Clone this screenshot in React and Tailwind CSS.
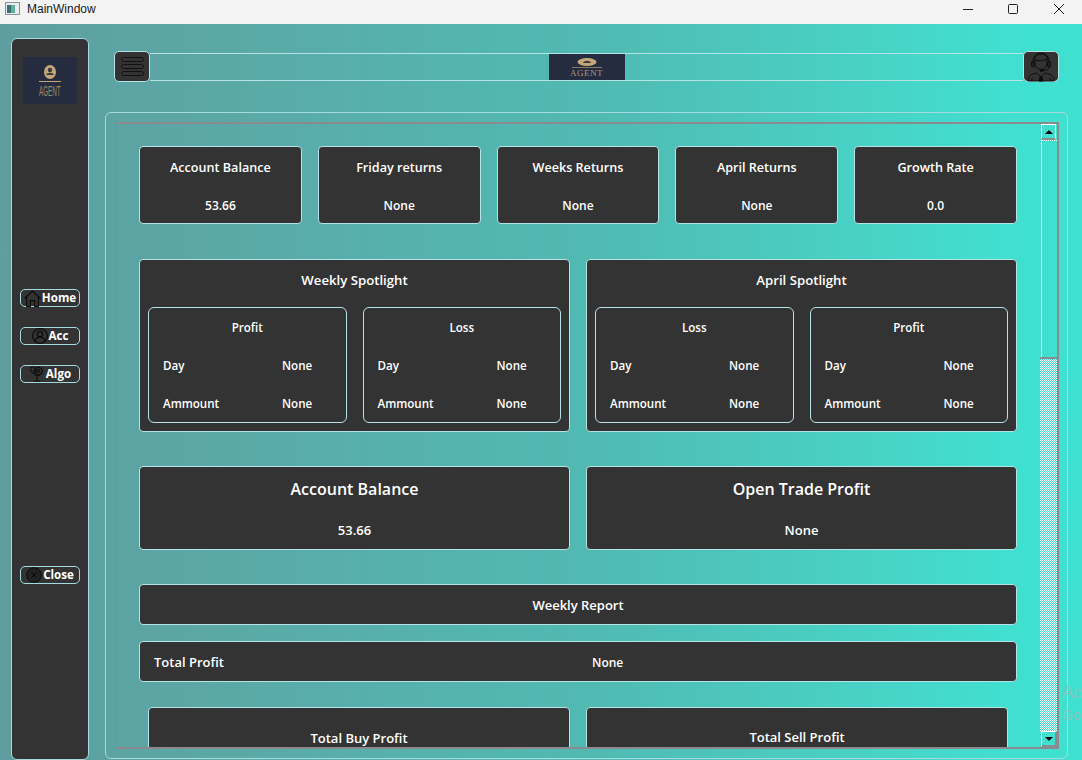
import React from 'react';

const FONT = "font-['Open_Sans','Noto_Sans',sans-serif]";

const StatCard = ({ title, value }) => (
  <div className="flex h-[78px] flex-1 flex-col items-center rounded border border-[#b5e3e6] bg-[#333333] pt-[13px] font-semibold text-white">
    <div className="text-[12.6px] leading-4">{title}</div>
    <div className="mt-[22px] text-xs leading-4">{value}</div>
  </div>
);

const MiniCard = ({ title }) => (
  <div className="flex h-[116px] flex-1 flex-col rounded-md border border-[#b5e3e6] px-[14px] pt-[12px] text-[11.6px] font-semibold text-white">
    <div className="text-center leading-4">{title}</div>
    <div className="mt-[22px] flex leading-4">
      <span className="w-[119px]">Day</span>
      <span>None</span>
    </div>
    <div className="mt-[22px] flex leading-4">
      <span className="w-[119px]">Ammount</span>
      <span>None</span>
    </div>
  </div>
);

const Spotlight = ({ title, first, second }) => (
  <div className="flex h-[173px] flex-1 flex-col rounded border border-[#b5e3e6] bg-[#333333] px-2 pt-[12px]">
    <div className="text-center text-[13.2px] font-semibold leading-4 text-white">{title}</div>
    <div className="mt-[19px] flex gap-4">
      <MiniCard title={first} />
      <MiniCard title={second} />
    </div>
  </div>
);

const BigCard = ({ title, value }) => (
  <div className="flex h-[84px] flex-1 flex-col items-center rounded border border-[#b5e3e6] bg-[#333333] pt-[12px] font-semibold text-white">
    <div className="text-base leading-5">{title}</div>
    <div className="mt-[23px] text-[13px] leading-4">{value}</div>
  </div>
);

const AgentLogo = ({ wide }) =>
  wide ? (
    <div className="flex h-[26px] w-[76px] flex-col items-center bg-[#262c40]">
      <svg width="46" height="15" viewBox="0 0 46 15" className="shrink-0">
        <ellipse cx="23" cy="8" rx="9.500" ry="4" fill="#c5a67c" />
        <path d="M19 9c1-3 7-3 8 0z" fill="#3d3a3a" />
        <path d="M8 13.500H38" stroke="#8a7a62" strokeWidth="1" />
      </svg>
      <div className="font-['Liberation_Serif',serif] text-[9px] leading-[9px] tracking-[0.5px] text-[#a8977a]">AGENT</div>
    </div>
  ) : (
    <div className="flex h-[47px] w-[54px] flex-col items-center bg-[#262c40] pt-2">
      <svg width="22" height="18" viewBox="0 0 22 18" className="shrink-0">
        <ellipse cx="11" cy="7" rx="6" ry="7" fill="#c5a67c" />
        <circle cx="11" cy="5" r="2.200" fill="#3d3a3a" />
        <path d="M7 10c1-3 7-3 8 0z" fill="#3d3a3a" />
        <path d="M0 16.500H22" stroke="#c5a67c" strokeWidth="1" />
      </svg>
      <div className="mt-[2px] scale-x-[0.42] font-['Liberation_Sans',sans-serif] text-[15px] leading-[12px] text-[#9c8a64]">AGENT</div>
    </div>
  );

const HomeIcon = () => (
  <svg width="17" height="17" viewBox="0 0 16 16" fill="none" stroke="#0a0a0a" strokeWidth="1">
    <path d="M0.500 8 8 1l7.500 7M2.500 6.500V15.500H6V10h4v5.500h3.500V6.500" />
  </svg>
);

const UserIcon = () => (
  <svg width="16" height="16" viewBox="0 0 16 16" fill="none" stroke="#0a0a0a" strokeWidth="1.100">
    <circle cx="8" cy="8" r="7.400" />
    <circle cx="8" cy="6.300" r="2.700" />
    <path d="M3 13c.8-3 2.800-3.800 5-3.800s4.200.8 5 3.800" />
  </svg>
);

const AlgoIcon = () => (
  <svg width="16" height="16" viewBox="0 0 16 16" fill="none" stroke="#0a0a0a" strokeWidth="1.400" strokeDasharray="1.500 0.700">
    <circle cx="9.500" cy="5" r="3.800" />
    <circle cx="4" cy="3.500" r="2.500" />
    <circle cx="9" cy="5" r="1.500" />
    <path d="M8 9v6.500M5 15.500h6M4 7l4 3M13 7l-4 3" />
  </svg>
);

const CloseIcon = () => (
  <svg width="16" height="16" viewBox="0 0 16 16" fill="#222" stroke="#0a0a0a" strokeWidth="1">
    <circle cx="8" cy="8" r="7.300" />
    <path d="M5.500 5.500l5 5M10.500 5.500l-5 5" stroke="#050505" />
  </svg>
);

const NavButton = ({ label, icon, className }) => (
  <button className={`flex h-[18px] w-[60px] items-center justify-center gap-px rounded-[5px] border border-[#a4dbe0] text-[11.6px] font-bold text-white ${className}`}>
    {icon}
    <span className="leading-4">{label}</span>
  </button>
);

const HeadBtn = ({ children }) => (
  <div className="flex h-[31px] w-[36px] shrink-0 items-center justify-center rounded-[5px] border border-[#b5e3e6] bg-[#333333]">
    {children}
  </div>
);

export default function App() {
  return (
    <div className={`relative flex h-[760px] w-[1082px] flex-col overflow-hidden ${FONT}`}>
      {/* title bar */}
      <div className="flex h-6 shrink-0 items-center bg-[#f3f3f3] pb-[7px] pl-[5px] font-['Liberation_Sans',sans-serif] text-xs text-[#1a1a1a]">
        <svg width="15" height="13" viewBox="0 0 15 13">
          <rect x="0.500" y="0.500" width="14" height="12" fill="#e8eef0" stroke="#8a949a" />
          <rect x="2" y="3" width="4" height="8" fill="#3a6f7a" />
          <rect x="6" y="3" width="4" height="8" fill="#5fb09a" />
        </svg>
        <span className="ml-[7px]">MainWindow</span>
        <div className="ml-auto flex items-center">
          <svg width="12" height="12" viewBox="0 0 12 12" className="mr-[33px]"><path d="M1 6.500h10" stroke="#222" /></svg>
          <svg width="12" height="12" viewBox="0 0 12 12" className="mr-[34px]"><rect x="1.500" y="1.500" width="9" height="9" rx="1" fill="none" stroke="#222" /></svg>
          <svg width="12" height="12" viewBox="0 0 12 12" className="mr-[17px]"><path d="M1 1l10 10M11 1 1 11" stroke="#222" /></svg>
        </div>
      </div>

      {/* main area */}
      <div className="flex min-h-0 flex-1 bg-gradient-to-r from-[#5f9ea0] via-[#50bab2] via-[55%] to-[#40e0d0] to-[94%]">
        {/* sidebar */}
        <div className="ml-[11px] mt-[14px] flex h-[722px] w-[78px] shrink-0 flex-col items-center rounded-md border border-[#a4dbe0] bg-[#333333] pt-[18px]">
          <AgentLogo />
          <NavButton label="Home" icon={<HomeIcon />} className="mt-[185px]" />
          <NavButton label="Acc" icon={<UserIcon />} className="mt-[20px]" />
          <NavButton label="Algo" icon={<AlgoIcon />} className="mt-[20px]" />
          <NavButton label="Close" icon={<CloseIcon />} className="mt-[183px]" />
        </div>

        <div className="ml-[16px] flex w-[963px] flex-col">
          {/* top bar */}
          <div className="ml-[9px] mt-[27px] flex h-[31px] w-[945px] items-center">
            <HeadBtn>
              <div className="flex flex-col gap-[2px]">
                <div className="h-[5px] w-[23px] rounded-sm border border-[#111]" />
                <div className="h-[5px] w-[23px] rounded-sm border border-[#111]" />
                <div className="h-[5px] w-[23px] rounded-sm border border-[#111]" />
              </div>
            </HeadBtn>
            <div className="flex h-[28px] flex-1 items-center justify-center border-y border-[#b5e3e6]">
              <AgentLogo wide />
            </div>
            <HeadBtn>
              <svg width="32" height="30" viewBox="0 0 32 30" fill="none" stroke="#0d0d0d" strokeWidth="1">
                <path d="M10 8c3 1 9 1 12-1v4.500a6 6 0 0 1-12 0z" />
                <path d="M10 8c-1-4 3-6 6-6s7 2 6 5" />
                <path d="M8 14V9a8 8 0 0 1 16 0v5" />
                <rect x="6.500" y="9.500" width="3" height="5.500" rx="1.500" />
                <rect x="22.500" y="9.500" width="3" height="5.500" rx="1.500" />
                <path d="M24 15c0 2.500-3 3.500-6 3.500" />
                <circle cx="16.500" cy="18.500" r="1.200" fill="#0d0d0d" />
                <path d="M3 29v-1.500c0-3.500 4-5.500 8.500-6.500l4.500 4 4.500-4c4.500 1 8.500 3 8.500 6.500V29z" />
                <path d="M15 25h2l1 4h-4z" fill="#0d0d0d" />
                <path d="M7 29v-3M25 29v-3" />
              </svg>
            </HeadBtn>
          </div>

          {/* scroll frame */}
          <div className="mt-[30px] h-[647px] w-[963px] rounded-md border border-[#a4dbe0] p-[9px]">
            <div className="flex h-[627px] w-[944px] border-b-2 border-l border-r-2 border-t-2 border-[#8a8a8f]">
              <div className="flex-1 overflow-hidden pl-[23px] pr-[23px] pt-[22px]">
                <div className="flex gap-[16px]">
                  <StatCard title="Account Balance" value="53.66" />
                  <StatCard title="Friday returns" value="None" />
                  <StatCard title="Weeks Returns" value="None" />
                  <StatCard title="April Returns" value="None" />
                  <StatCard title="Growth Rate" value="0.0" />
                </div>

                <div className="mt-[35px] flex gap-4">
                  <Spotlight title="Weekly Spotlight" first="Profit" second="Loss" />
                  <Spotlight title="April Spotlight" first="Loss" second="Profit" />
                </div>

                <div className="mt-[34px] flex gap-4">
                  <BigCard title="Account Balance" value="53.66" />
                  <BigCard title="Open Trade Profit" value="None" />
                </div>

                <div className="mt-[34px] flex h-[41px] items-center justify-center rounded border border-[#b5e3e6] bg-[#333333] pt-[2px] text-[13px] font-semibold text-white">
                  Weekly Report
                </div>

                <div className="mt-[16px] flex h-[41px] items-center rounded border border-[#b5e3e6] bg-[#333333] pl-[14px] pt-[2px] text-[13px] font-semibold text-white">
                  <span className="w-[438px]">Total Profit</span>
                  <span className="text-xs">None</span>
                </div>

                <div className="mt-[25px] flex gap-4 pl-[9px] pr-[9px]">
                  <div className="h-[90px] flex-1 rounded-t border border-[#b5e3e6] bg-[#333333] pt-[22px] text-center text-[13px] font-semibold leading-4 text-white">
                    Total Buy Profit
                  </div>
                  <div className="h-[90px] flex-1 rounded-t border border-[#b5e3e6] bg-[#333333] pt-[21px] text-center text-[13px] font-semibold leading-4 text-white">
                    Total Sell Profit
                  </div>
                </div>
              </div>

              {/* scrollbar */}
              <div className="flex w-[17px] shrink-0 flex-col">
                <div className="ml-px flex h-[16px] w-[15px] items-center justify-center border-x border-t border-white border-b-2 border-b-[#8a8a8f]">
                  <svg width="8" height="4" viewBox="0 0 8 4"><path d="M0 4 4 0l4 4z" fill="#000" /></svg>
                </div>
                <div className="ml-px h-[217px] border-l border-t border-white [border-top-style:dotted]" />
                <div className="min-h-0 flex-1 border-t-2 border-[#8a8a8f] bg-[repeating-conic-gradient(#ffffff_0_25%,transparent_0_50%)] bg-[length:2px_2px]" />
                <div className="ml-px flex h-[16px] w-[16px] items-center justify-center border-b-2 border-l border-r-2 border-t border-b-[#8a8a8f] border-l-white border-r-[#8a8a8f] border-t-white">
                  <svg width="8" height="4" viewBox="0 0 8 4"><path d="M0 0h8L4 4z" fill="#000" /></svg>
                </div>
              </div>
            </div>
          </div>
        </div>
      </div>

      {/* watermark peeking through on the right edge */}
      <div className="absolute left-[1062px] top-[681px] whitespace-nowrap font-['Liberation_Sans',sans-serif] text-[17px] leading-6 text-[#86c6c2]">Ac</div>
      <div className="absolute left-[1062px] top-[707px] whitespace-nowrap font-['Liberation_Sans',sans-serif] text-[14px] leading-4 text-[#86c6c2]">Go</div>
    </div>
  );
}
